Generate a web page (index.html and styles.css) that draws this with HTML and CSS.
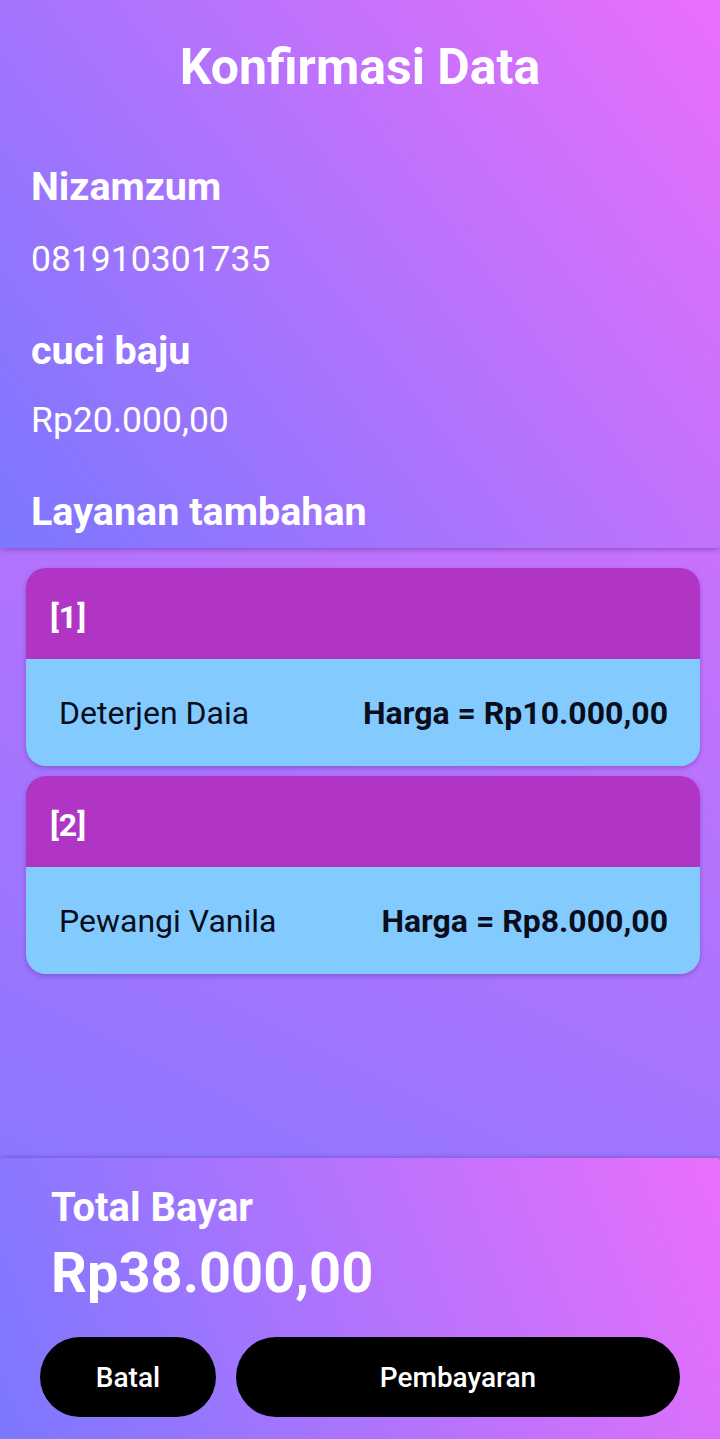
FILE: index.html
```html
<!DOCTYPE html>
<html lang="id">
<head>
<meta charset="utf-8">
<title>Konfirmasi Data</title>
<link rel="stylesheet" href="styles.css">
</head>
<body>
<div class="screen">
  <header class="summary">
    <h1 class="title">Konfirmasi Data</h1>
    <div class="label name">Nizamzum</div>
    <div class="value phone">081910301735</div>
    <div class="label service">cuci baju</div>
    <div class="value price">Rp20.000,00</div>
    <div class="label extra">Layanan tambahan</div>
  </header>

  <main class="list">
    <div class="card">
      <div class="card-head">[1]</div>
      <div class="card-body">
        <span class="item">Deterjen Daia</span>
        <span class="cost">Harga = Rp10.000,00</span>
      </div>
    </div>
    <div class="card">
      <div class="card-head">[2]</div>
      <div class="card-body">
        <span class="item">Pewangi Vanila</span>
        <span class="cost">Harga = Rp8.000,00</span>
      </div>
    </div>
  </main>

  <footer class="footer">
    <div class="total-label">Total Bayar</div>
    <div class="total-value">Rp38.000,00</div>
    <div class="actions">
      <button class="btn btn-cancel">Batal</button>
      <button class="btn btn-pay">Pembayaran</button>
    </div>
  </footer>
</div>
</body>
</html>
```

FILE: styles.css
```css
* { box-sizing: border-box; }

html, body {
  margin: 0;
  padding: 0;
}

body {
  font-family: Roboto, "Noto Sans", "Liberation Sans", sans-serif;
  color: #ffffff;
  background: #a777ff;
}

.screen {
  min-height: 1439px;
  display: flex;
  flex-direction: column;
  background: linear-gradient(26.6deg, #7b78ff 0%, #ea6ffc 100%);
}

.summary {
  height: 548px;
  padding: 39px 31px 0;
  background: linear-gradient(52.7deg, #7b77fe 0%, #ea6ffc 100%);
  box-shadow: 0 2px 5px rgba(60, 20, 120, 0.35);
  border-radius: 0 0 4px 4px;
}

.title {
  margin: 0;
  font-size: 50px;
  line-height: 56px;
  font-weight: 700;
  text-align: center;
}

.label {
  font-size: 39.5px;
  line-height: 44px;
  font-weight: 700;
}

.value {
  font-size: 35.5px;
  line-height: 44px;
  font-weight: 400;
}

.name { margin-top: 70px; }
.phone { margin-top: 28px; }
.service { margin-top: 48px; }
.price { margin-top: 25px; }
.extra { margin-top: 48px; }

.list {
  padding: 20px 20px 0 26px;
  display: flex;
  flex-direction: column;
  gap: 10px;
}

.card {
  border-radius: 20px;
  overflow: hidden;
  box-shadow: 0 2px 5px rgba(60, 20, 120, 0.3);
}

.card-head {
  height: 91px;
  padding: 27px 24px 0;
  background: #b035c4;
  font-size: 32px;
  line-height: 44px;
  font-weight: 700;
  color: #ffffff;
}

.card-body {
  height: 107px;
  padding: 0 32px 0 33px;
  background: #83caff;
  display: flex;
  align-items: center;
  justify-content: space-between;
  color: #0a0e1c;
  font-size: 32px;
}

.item { font-weight: 400; }
.cost { font-weight: 700; }

.footer {
  margin-top: auto;
  height: 281px;
  padding: 26px 40px 0;
  background: linear-gradient(68.7deg, #7b78ff 0%, #ea6ffc 100%);
  box-shadow: 0 -1px 4px rgba(60, 20, 120, 0.3);
  border-radius: 4px 4px 0 0;
}

.total-label {
  padding-left: 11px;
  font-size: 40px;
  line-height: 48px;
  font-weight: 700;
}

.total-value {
  margin-top: 8px;
  padding-left: 11px;
  font-size: 56px;
  line-height: 66px;
  font-weight: 700;
}

.actions {
  margin-top: 31px;
  display: flex;
  gap: 20px;
}

.btn {
  height: 80px;
  border: none;
  border-radius: 40px;
  background: #000000;
  color: #ffffff;
  font-family: Roboto, "Noto Sans", "Liberation Sans", sans-serif;
  font-size: 28px;
  font-weight: 500;
  padding: 0;
}

.btn-cancel { width: 176px; }
.btn-pay { flex: 1; }
```
